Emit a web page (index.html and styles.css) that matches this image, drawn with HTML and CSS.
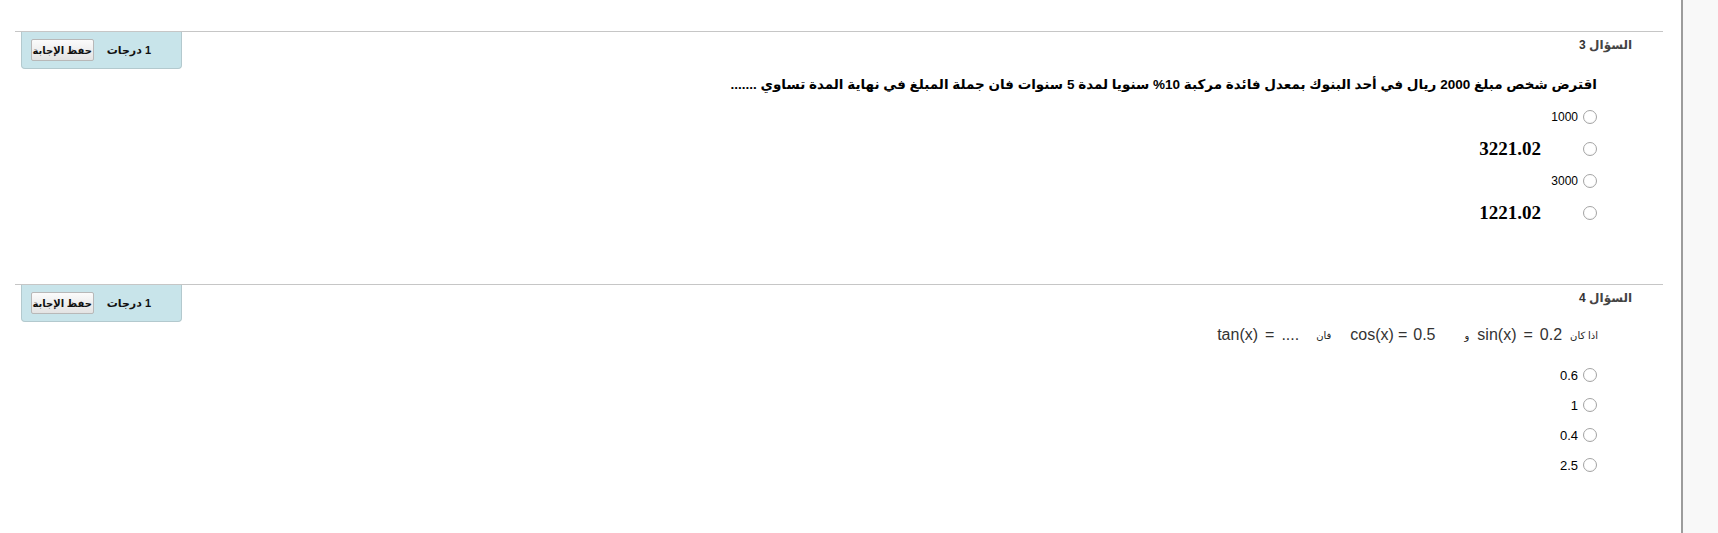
FILE: index.html
```html
<!DOCTYPE html>
<html lang="ar">
<head>
<meta charset="utf-8">
<title>أسئلة</title>
<link rel="stylesheet" href="styles.css">
</head>
<body>
<div class="page">
  <main class="content" dir="rtl">
    <section class="question">
      <header class="q-head">
        <div class="q-title">السؤال <b>3</b></div>
        <div class="q-points">
          <span class="points">1 درجات</span>
          <button class="save" type="button">حفظ الإجابة</button>
        </div>
      </header>
      <p class="q-text">اقترض شخص مبلغ 2000 ريال في أحد البنوك بمعدل فائدة مركبة 10% سنويا لمدة 5 سنوات فان جملة المبلغ في نهاية المدة تساوي .......</p>
      <ul class="options opts-a">
        <li class="opt"><span class="radio"></span><span class="lbl">1000</span></li>
        <li class="opt"><span class="radio"></span><span class="lbl lbl-big">3221.02</span></li>
        <li class="opt"><span class="radio"></span><span class="lbl">3000</span></li>
        <li class="opt"><span class="radio"></span><span class="lbl lbl-big">1221.02</span></li>
      </ul>
    </section>

    <section class="question q-next">
      <header class="q-head">
        <div class="q-title">السؤال <b>4</b></div>
        <div class="q-points">
          <span class="points">1 درجات</span>
          <button class="save" type="button">حفظ الإجابة</button>
        </div>
      </header>
      <div class="math-line">
        <span class="ar-small gap-8">اذا كان</span>
        <span class="math gap-8">sin(x)<span class="op">=</span>0.2</span>
        <span class="ar-small gap-29">و</span>
        <span class="math gap-19">cos(x)<span class="op op-tight">=</span>0.5</span>
        <span class="ar-small gap-17">فان</span>
        <span class="math">tan(x)<span class="op">=</span>....</span>
      </div>
      <ul class="options opts-b">
        <li class="opt"><span class="radio"></span><span class="lbl lbl-md">0.6</span></li>
        <li class="opt"><span class="radio"></span><span class="lbl lbl-md">1</span></li>
        <li class="opt"><span class="radio"></span><span class="lbl lbl-md">0.4</span></li>
        <li class="opt"><span class="radio"></span><span class="lbl lbl-md">2.5</span></li>
      </ul>
    </section>
  </main>
  <aside class="side"></aside>
</div>
</body>
</html>
```
FILE: styles.css
```css
html, body {
  margin: 0;
  padding: 0;
  background: #fff;
}

body {
  font-family: "Liberation Sans", "DejaVu Sans", Arial, sans-serif;
  color: #000;
}

.page {
  display: flex;
  min-height: 533px;
}

.content {
  width: 1681px;
  flex: none;
  border-right: 2px solid #9c9c9c;
  padding-top: 31px;
}

.side {
  flex: 1;
  background: #f8f8f8;
}

.question {
  margin: 0 18px 0 15px;
  border-top: 1px solid #c6c6c6;
}

.q-next {
  margin-top: 55px;
}

.q-head {
  display: flex;
  justify-content: space-between;
  align-items: flex-start;
}

.q-title {
  padding-right: 31px;
  padding-top: 6px;
  font-size: 12px;
  font-weight: bold;
  color: #444;
}

.q-title b {
  color: #333;
}

.q-points {
  margin-left: 6px;
  width: 161px;
  height: 37px;
  box-sizing: border-box;
  background: #c8e4ea;
  border: 1px solid #b3c9ce;
  border-top: 0;
  border-radius: 0 0 4px 4px;
  display: flex;
  align-items: center;
  padding-right: 30px;
  gap: 13px;
}

.points {
  font-size: 11px;
  font-weight: bold;
  color: #111;
}

.save {
  font: bold 10px "Liberation Sans", "DejaVu Sans", sans-serif;
  color: #111;
  width: 63px;
  height: 22px;
  padding: 0;
  border: 1px solid #b8b8b8;
  border-radius: 2px;
  background: linear-gradient(#fbfbfb, #e3e3e3);
}

.q-text {
  margin: 4px 66px 0 0;
  font-size: 13.5px;
  font-weight: bold;
  line-height: 24px;
}

.options {
  list-style: none;
  margin: 4px 66px 0 0;
  padding: 0;
}

.opt {
  display: flex;
  align-items: center;
  height: 32px;
}

.opts-b {
  margin-top: 13px;
}

.opts-b .opt {
  height: 30px;
}

.radio {
  flex: none;
  width: 14px;
  height: 14px;
  box-sizing: border-box;
  border: 1px solid #a4a4a4;
  border-radius: 50%;
  background: radial-gradient(circle at 50% 40%, #ffffff 55%, #f1f1f1 100%);
}

.lbl {
  margin-right: 5px;
  font-size: 12px;
}

.lbl-md {
  font-size: 13px;
}

.lbl-big {
  margin-right: 42px;
  font-family: "Liberation Serif", "Times New Roman", serif;
  font-weight: bold;
  font-size: 19px;
}

.math-line {
  display: flex;
  align-items: center;
  height: 24px;
  margin: 1px 65px 0 0;
}

.ar-small {
  font-size: 10px;
  color: #222;
}

.math {
  direction: ltr;
  unicode-bidi: isolate;
  font-size: 16px;
  color: #333;
}

.op {
  margin: 0 7px;
}

.op-tight {
  margin: 0 6px 0 4px;
}

.gap-8 { margin-left: 8px; }
.gap-17 { margin-left: 17px; }
.gap-19 { margin-left: 19px; }
.gap-29 { margin-left: 29px; }
```
